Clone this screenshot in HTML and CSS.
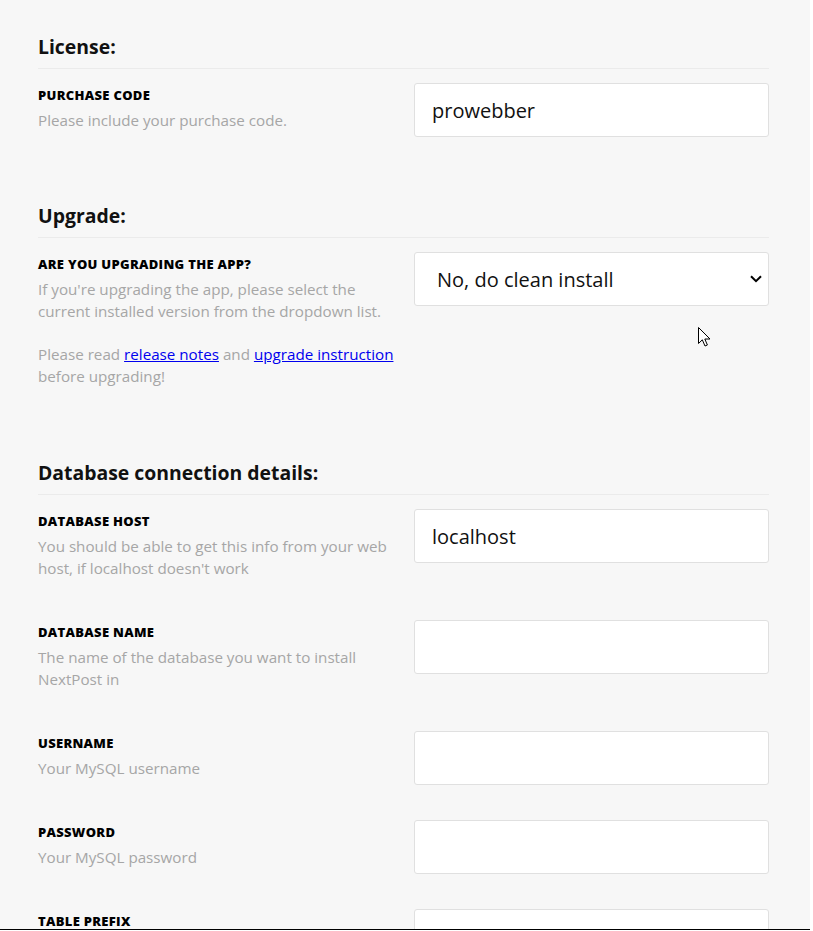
FILE: index.html
```html
<!DOCTYPE html>
<html lang="en">
<head>
<meta charset="utf-8">
<title>Installation</title>
<link rel="stylesheet" href="styles.css">
</head>
<body>
<div class="page">
  <section class="section">
    <h2 class="section-title">License:</h2>
    <div class="rows">
      <div class="row">
        <div class="info">
          <div class="label">Purchase code</div>
          <div class="desc"><p>Please include your purchase code.</p></div>
        </div>
        <div class="control"><input class="input" type="text" value="prowebber"></div>
      </div>
    </div>
  </section>

  <section class="section">
    <h2 class="section-title">Upgrade:</h2>
    <div class="rows">
      <div class="row">
        <div class="info">
          <div class="label">Are you upgrading the app?</div>
          <div class="desc">
            <p>If you're upgrading the app, please select the current installed version from the dropdown list.</p>
            <p class="gap">Please read <a href="#">release notes</a> and <a href="#">upgrade instruction</a> before upgrading!</p>
          </div>
        </div>
        <div class="control">
          <div class="select-wrap">
            <select class="input select">
              <option>No, do clean install</option>
            </select>
            <svg class="chevron" width="12" height="8" viewBox="0 0 12 8"><path d="M1 1.2 L6 6.2 L11 1.2" fill="none" stroke="#000" stroke-width="2"/></svg>
          </div>
          <svg class="cursor" width="14" height="21" viewBox="0 0 14 21"><path d="M0.5 0.5 L0.5 16.5 L4.3 12.8 L7 19 L9.4 18 L6.8 12 L12 12 Z" fill="#fff" stroke="#000" stroke-width="1"/></svg>
        </div>
      </div>
    </div>
  </section>

  <section class="section section-db">
    <h2 class="section-title">Database connection details:</h2>
    <div class="rows">
      <div class="row">
        <div class="info">
          <div class="label">Database host</div>
          <div class="desc"><p>You should be able to get this info from your web host, if localhost doesn't work</p></div>
        </div>
        <div class="control"><input class="input" type="text" value="localhost"></div>
      </div>
      <div class="row">
        <div class="info">
          <div class="label">Database name</div>
          <div class="desc"><p>The name of the database you want to install NextPost in</p></div>
        </div>
        <div class="control"><input class="input" type="text" value=""></div>
      </div>
      <div class="row">
        <div class="info">
          <div class="label">Username</div>
          <div class="desc"><p>Your MySQL username</p></div>
        </div>
        <div class="control"><input class="input" type="text" value=""></div>
      </div>
      <div class="row">
        <div class="info">
          <div class="label">Password</div>
          <div class="desc"><p>Your MySQL password</p></div>
        </div>
        <div class="control"><input class="input" type="password" value=""></div>
      </div>
      <div class="row">
        <div class="info">
          <div class="label">Table prefix</div>
          <div class="desc"><p>Table prefix</p></div>
        </div>
        <div class="control"><input class="input" type="text" value=""></div>
      </div>
    </div>
  </section>
</div>
</body>
</html>
```
FILE: styles.css
```css
html, body {
  margin: 0;
  padding: 0;
  background: #ffffff;
  height: 931px;
  overflow: hidden;
}

body {
  font-family: "Open Sans", Lato, Arial, sans-serif;
  color: #111;
}

.page {
  width: 810px;
  height: 930px;
  box-sizing: border-box;
  background: #f7f7f7;
  padding: 35px 41px 0 38px;
  border-bottom: 1px solid #000;
  overflow: hidden;
  display: flex;
  flex-direction: column;
  gap: 67px;
}

.section {
  margin: 0;
}

.section-db {
  margin-top: 1px;
}

.section-title {
  margin: 0 0 14px;
  padding-bottom: 9px;
  font-size: 19.4px;
  line-height: 24px;
  font-weight: 700;
  color: #111;
  border-bottom: 1px solid #ebebeb;
}

.rows {
  display: flex;
  flex-direction: column;
  gap: 35px;
}

.row {
  display: grid;
  grid-template-columns: 1fr 355px;
  align-items: start;
}

.info {
  padding-right: 14px;
  padding-bottom: 6px;
}

.label {
  font-size: 13px;
  line-height: 24px;
  font-weight: 800;
  letter-spacing: 0.3px;
  text-transform: uppercase;
  color: #000;
}

.desc {
  margin-top: 2px;
  font-size: 15.2px;
  line-height: 22px;
  color: #a6a6a6;
}

.desc p {
  margin: 0;
}

.desc p.gap {
  margin-top: 21px;
}

.desc a {
  color: #0000ee;
  text-decoration: underline;
}

.control {
  position: relative;
}

.input {
  display: block;
  width: 100%;
  height: 54px;
  box-sizing: border-box;
  margin: 0;
  padding: 0 17px;
  border: 1px solid #e0e0e0;
  border-radius: 3px;
  background: #fff;
  font-family: inherit;
  font-size: 20px;
  color: #111;
  outline: none;
}

.select-wrap {
  position: relative;
}

.select {
  -webkit-appearance: none;
  appearance: none;
  padding-left: 22px;
}

.chevron {
  position: absolute;
  right: 7px;
  top: 23px;
  pointer-events: none;
}

.cursor {
  position: absolute;
  left: 284px;
  top: 75px;
}
```
